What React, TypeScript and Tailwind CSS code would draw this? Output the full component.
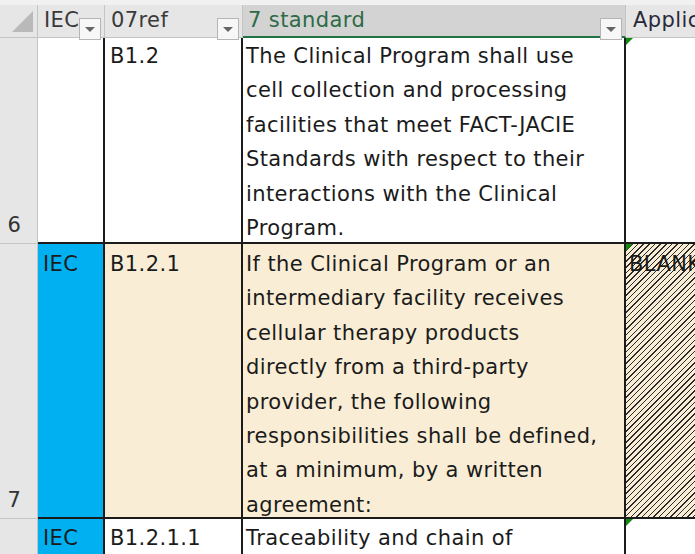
import React from "react"

const font = { fontFamily: '"DejaVu Sans", sans-serif' }

function FilterButton() {
  return (
    <div className="absolute right-[3px] top-[13px] flex h-[22px] w-[22px] items-center justify-center border border-[#b5b5b5] bg-[#f7f7f7]">
      <div className="h-0 w-0 border-x-[5px] border-t-[5px] border-x-transparent border-t-[#666]" />
    </div>
  )
}

function Lines({ lines }: { lines: string[] }) {
  return (
    <>
      {lines.map((l) => (
        <div key={l} className="whitespace-nowrap">{l}</div>
      ))}
    </>
  )
}

function Comment() {
  return <div className="absolute left-0 top-0 h-0 w-0 border-r-[7px] border-t-[7px] border-r-transparent border-t-[#108a10]" />
}

export default function App() {
  const row6 = [
    "The Clinical Program shall use",
    "cell collection and processing",
    "facilities that meet FACT-JACIE",
    "Standards with respect to their",
    "interactions with the Clinical",
    "Program.",
  ]
  const row7 = [
    "If the Clinical Program or an",
    "intermediary facility receives",
    "cellular therapy products",
    "directly from a third-party",
    "provider, the following",
    "responsibilities shall be defined,",
    "at a minimum, by a written",
    "agreement:",
  ]

  return (
    <div className="h-[554px] w-[695px] overflow-hidden bg-white text-[21px] leading-[34.4px] tracking-[0.4px] text-[#1b1b1b]" style={font}>
      <div className="h-[5px] bg-[#f1f1f1]" />
      <div className="grid grid-cols-[38px_67px_138px_383px_1fr] grid-rows-[33px_206px_275px_40px]">
        {/* header row */}
        <div className="relative border-b border-r border-[#c4c4c4] bg-[#e6e6e6]">
          <div className="absolute bottom-[5px] right-[4px] h-0 w-0 border-b-[21px] border-l-[21px] border-l-transparent border-b-[#b9b9b9]" />
        </div>
        <div className="relative border-b border-r border-[#c4c4c4] bg-[#e6e6e6] pl-[6px] leading-[30px] text-[#3a3a3a]">
          IEC
          <FilterButton />
        </div>
        <div className="relative border-b border-r border-[#c4c4c4] bg-[#e6e6e6] pl-[6px] leading-[30px] text-[#3a3a3a]">
          07ref
          <FilterButton />
        </div>
        <div className="relative border-b-2 border-r border-b-[#217346] border-r-[#c4c4c4] bg-[#d3d3d3] pl-[5px] leading-[30px] text-[#2d6a45]">
          7 standard
          <FilterButton />
        </div>
        <div className="relative overflow-hidden whitespace-nowrap border-b border-[#c4c4c4] bg-[#e6e6e6] pl-[7px] leading-[30px] text-[#2a2a3a]">
          Applicability
        </div>

        {/* row 6 */}
        <div className="flex items-end justify-center border-b border-r border-[#c4c4c4] bg-[#e6e6e6] pb-[1px] pr-[8px] text-[#333]">6</div>
        <div className="border-b-2 border-r-2 border-[#1b1b1b] bg-white" />
        <div className="border-b-2 border-r-2 border-[#1b1b1b] bg-white pl-[5px] pt-[1px]">B1.2</div>
        <div className="border-b-2 border-r-2 border-[#1b1b1b] bg-white pl-[3px] pt-[1px]">
          <Lines lines={row6} />
        </div>
        <div className="relative border-b-2 border-[#1b1b1b] bg-white">
          <Comment />
        </div>

        {/* row 7 */}
        <div className="flex items-end justify-center border-b border-r border-[#c4c4c4] bg-[#e6e6e6] pb-[1px] pr-[8px] text-[#333]">7</div>
        <div className="border-b-2 border-r-2 border-b-[#1b1b1b] border-r-[#1b1b1b] bg-[#00b0f0] pl-[5px] pt-[3px]">IEC</div>
        <div className="border-b-2 border-r-2 border-[#1b1b1b] bg-[#f9eed5] pl-[5px] pt-[3px]">B1.2.1</div>
        <div className="border-b-2 border-r-2 border-[#1b1b1b] bg-[#f9eed5] pl-[3px] pt-[3px]">
          <Lines lines={row7} />
        </div>
        <div className="relative overflow-hidden whitespace-nowrap border-b-2 border-[#1b1b1b] bg-[#f9eed5] bg-[repeating-linear-gradient(135deg,#2a2a2a_0px,#2a2a2a_1px,transparent_1px,transparent_4px)] pl-[3px] pt-[3px]">
          BLANK
          <Comment />
        </div>

        {/* row 8 */}
        <div className="border-r border-[#c4c4c4] bg-[#e6e6e6]" />
        <div className="border-r-2 border-[#1b1b1b] bg-[#00b0f0] pl-[5px] pt-[2px]">IEC</div>
        <div className="border-r-2 border-[#1b1b1b] bg-white pl-[5px] pt-[2px]">B1.2.1.1</div>
        <div className="whitespace-nowrap border-r-2 border-[#1b1b1b] bg-white pl-[3px] pt-[2px]">Traceability and chain of</div>
        <div className="relative bg-white">
          <Comment />
        </div>
      </div>
    </div>
  )
}
